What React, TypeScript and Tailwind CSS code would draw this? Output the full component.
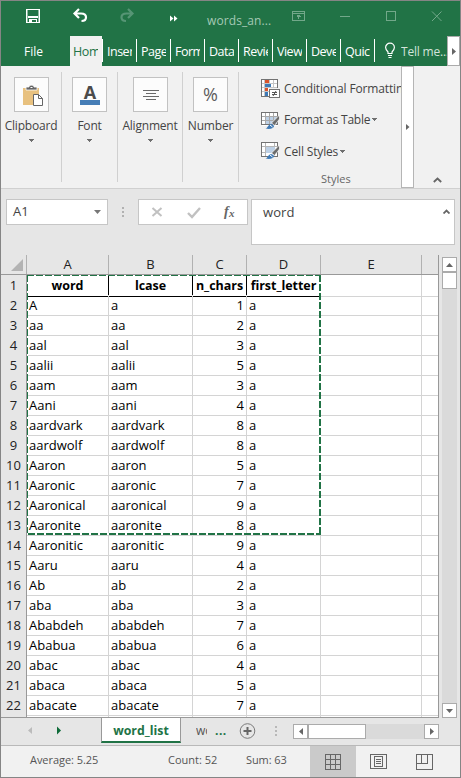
import React from "react";

const WORDS: [string, string, number][] = [
  ["A", "a", 1],
  ["aa", "aa", 2],
  ["aal", "aal", 3],
  ["aalii", "aalii", 5],
  ["aam", "aam", 3],
  ["Aani", "aani", 4],
  ["aardvark", "aardvark", 8],
  ["aardwolf", "aardwolf", 8],
  ["Aaron", "aaron", 5],
  ["Aaronic", "aaronic", 7],
  ["Aaronical", "aaronical", 9],
  ["Aaronite", "aaronite", 8],
  ["Aaronitic", "aaronitic", 9],
  ["Aaru", "aaru", 4],
  ["Ab", "ab", 2],
  ["aba", "aba", 3],
  ["Ababdeh", "ababdeh", 7],
  ["Ababua", "ababua", 6],
  ["abac", "abac", 4],
  ["abaca", "abaca", 5],
  ["abacate", "abacate", 7],
];

const TABS = ["Inser", "Page", "Form", "Data", "Revie", "View", "Deve", "Quic"];

function Caret({ className = "" }: { className?: string }) {
  return (
    <svg width="5" height="3" className={className} shapeRendering="crispEdges">
      <path d="M0 0h5v1h-1v1h-1v1h-1v-1h-1v-1h-1z" fill="#6f6f6f" />
    </svg>
  );
}

function TitleBar() {
  return (
    <div className="flex h-[35px]">
      <svg width="206" height="35" fill="none">
        <g shapeRendering="crispEdges">
          <path d="M25.500 8.500h13v13h-13z" stroke="#fff" />
          <path d="M26 15h12v2H26z" fill="#fff" />
          <path d="M26 9h1v12h-1zM37 9h1v12h-1z" fill="#90b9a3" />
          <path d="M28 18h8v3h-1v-2h-4v2h-3z" fill="#fff" />
        </g>
        <path d="M78 8l-4.500 4.500L78 17M74 12.500h6c3.500 0 5 1.500 5 3.700s-1.800 3.800-4.500 3.800" stroke="#fff" strokeWidth="2.200" />
        <path d="M127 8l4.500 4.500L127 17M131 12.500h-5.500c-3.500 0-5 1.500-5 3.700s1.800 3.800 4.500 3.800" stroke="#569575" strokeWidth="2.200" />
        <path d="M169 14.500l3.500 3-3.500 3zM173 14.500l3.500 3-3.500 3z" fill="#fff" />
      </svg>
      <div className="w-[78px] pt-[11px] text-[12px] leading-[18px] tracking-[0.1px] text-[#a5c9b5]">words_an...</div>
      <svg width="175" height="35" fill="none" stroke="#72a88a" shapeRendering="crispEdges">
        <path d="M7.500 10.500h12v9h-12zM8 12.500h11M13.500 18v-4M11.500 15.500h1v-1h2v1h1" />
        <path d="M55 15.500h10M101.500 10.500h9v9h-9z" />
        <path d="M147 10.500l9.500 9.500M156.500 10.500L147 20" shapeRendering="auto" />
      </svg>
    </div>
  );
}

function Tabs() {
  return (
    <div className="flex h-[30px] text-[12.5px] leading-[31px] text-white">
      <div className="w-[69px] pl-[23px] text-[12px]">File</div>
      <div className="w-[32px] bg-[#f1f1f1] pl-[3px] text-[#217346]">
        <div className="w-[25px] overflow-hidden tracking-[-0.4px]">Home</div>
      </div>
      {TABS.map((t) => (
        <div key={t} className="flex w-[34px] shrink-0">
          <div className="mt-[3px] h-[23px] w-px bg-white" />
          <div className="ml-[4px] w-[25px] overflow-hidden tracking-[-0.5px]">{t}</div>
        </div>
      ))}
      <div className="mt-[3px] h-[23px] w-px bg-white" />
      <svg width="12" height="17" className="mt-[6px] ml-[9px] shrink-0" fill="none" stroke="#fff" strokeWidth="1.200">
        <path d="M4 11.500V10C2.500 8.500 1.600 7.300 1.600 5.600a4.400 4.400 0 0 1 8.800 0c0 1.700-.9 2.900-2.400 4.400v1.500zM4 13.500h4M4.500 15.500h3" />
      </svg>
      <div className="ml-[5px] w-[46px] overflow-hidden text-[12px] tracking-[-0.2px] whitespace-nowrap text-[#d3e3da]">Tell me...</div>
      <div className="flex w-[13px] shrink-0 items-center justify-center border border-[#ababab] bg-white">
        <svg width="4" height="7"><path d="M0 0l4 3.500-4 3.500z" fill="#666" /></svg>
      </div>
    </div>
  );
}

function Group({ width, label, children }: { width: string; label: string; children: React.ReactNode }) {
  return (
    <div className={`flex h-[110px] shrink-0 flex-col items-center border-r border-[#d0d0d0] pt-[5px] ${width}`}>
      <div className="h-[35px] w-[35px] border border-[#c2c2c2] bg-[#fcfcfc]">{children}</div>
      <div className="mt-[5px] text-[12px] leading-[18px] tracking-[-0.2px] whitespace-nowrap">{label}</div>
      <Caret className="mt-[4px]" />
    </div>
  );
}

function TableIcon({ kind }: { kind: "conditional" | "table" | "cell" }) {
  return (
    <svg width="19" height="20" fill="none" className="shrink-0">
      <g shapeRendering="crispEdges">
        <path d="M.5.500h16v13h-16z" fill="#fff" />
        {kind === "conditional" && (
          <>
            <path d="M1 1h15v16H1z" fill="#fff" />
            <path d="M1 4.500h15M1 8.500h15M1 12.500h15M3.500 1v16M8.500 1v16M12.500 1v12" stroke="#c6c6c6" />
            <path d="M.5.500h16v17h-16z" stroke="#737373" />
            <path d="M4 1h4v3H4zM4 9h3v3H4z" fill="#d9532c" />
            <path d="M4 5h6v3H4zM4 13h3v4H4z" fill="#3f7ab6" />
            <path d="M8 9h11v11H8z" fill="#f1f1f1" />
            <path d="M8.500 10.500h10v8h-10z" fill="#fff" stroke="#737373" />
            <path d="M11 13.500h5M11 15.500h5" stroke="#555" />
          </>
        )}
        {kind === "table" && (
          <>
            <path d="M5 5h11v8H5z" fill="#bdd0e5" />
            <path d="M1 4.500h15M1 8.500h15M4.500 1v12M8.500 1v12M12.500 1v12" stroke="#a9a9a9" />
            <path d="M.5.500h16v12h-16z" stroke="#737373" />
          </>
        )}
        {kind === "cell" && (
          <>
            <path d="M1 4.500h15M1 10.500h15M4.500 1v13M13.500 1v13" stroke="#b5b5b5" />
            <path d="M5 5h9v6H5z" fill="#bdd0e5" />
            <path d="M.5.500h16v14h-16z" stroke="#737373" />
          </>
        )}
      </g>
      {kind === "conditional" ? (
        <path d="M15 12l-3 5" stroke="#555" />
      ) : (
        <>
          <path d="M18.500 3v4l-5 6.500-3-2.500z" fill="#6c6c6c" stroke="#fff" strokeWidth=".7" />
          <path d="M4.500 16.500c2.500-.5 2-3.500 5.500-4.500 2 .3 3 1.500 3 2.500-.7 2.100-4.500 3-8.500 2z" fill="#3f7ab6" />
          <path d="M9 13l2.500 2" stroke="#fff" />
        </>
      )}
    </svg>
  );
}

function Ribbon() {
  return (
    <div className="flex h-[123px] border-b border-[#d0d0d0] bg-[#f1f1f1] text-[#444]">
      <div className="flex pt-[6px]">
        <Group width="w-[61px]" label="Clipboard">
          <svg width="33" height="33" fill="none">
            <path d="M8 10h16v17H8z" fill="#e8c17f" />
            <path d="M11 12V9h3c0-2.500 5-2.500 5 0h3v3z" fill="#666" stroke="#fcfcfc" strokeWidth=".8" />
            <path d="M15.500 9.500h2" stroke="#fff" />
            <path d="M18.500 16.500h5l4 4v7h-9zM23.500 16.500v4h4" fill="#fff" stroke="#666" />
          </svg>
        </Group>
        <Group width="w-[56px]" label="Font">
          <svg width="33" height="33">
            <text x="17" y="21" textAnchor="middle" fontFamily="Open Sans" fontWeight="bold" fontSize="18" fill="#4b4b4b">A</text>
            <path d="M7 22h20v5H7z" fill="#467db6" />
          </svg>
        </Group>
        <Group width="w-[65px]" label="Alignment">
          <svg width="33" height="33" stroke="#6a6a6a" shapeRendering="crispEdges">
            <path d="M9 12.500h16M12 15.500h10M9 18.500h16M12 21.500h10" />
          </svg>
        </Group>
        <Group width="w-[56px]" label="Number">
          <div className="text-center text-[18px] leading-[33px] text-[#5d5d5d]">%</div>
        </Group>
      </div>
      <div className="flex w-[162px] flex-col overflow-hidden pt-[13px] pl-[22px] text-[12px] leading-[18px] tracking-[-0.15px] whitespace-nowrap">
        <div className="flex h-[34px] gap-[4px]"><TableIcon kind="conditional" /><span className="pt-px">Conditional Formatting</span></div>
        <div className="flex h-[30px] gap-[4px]"><TableIcon kind="table" /><span className="-mt-px tracking-[-0.2px]">Format as Table</span><Caret className="mt-[6px] -ml-[2px]" /></div>
        <div className="flex h-[28px] gap-[4px]"><TableIcon kind="cell" /><span className="pt-px">Cell Styles</span><Caret className="mt-[8px] -ml-[2px]" /></div>
        <div className="pt-px pl-[60px] text-[11px] tracking-normal text-[#666]">Styles</div>
      </div>
      <div className="flex w-[13px] shrink-0 items-center justify-center border border-[#b5b5b5] bg-white">
        <svg width="4" height="6"><path d="M0 0l3.500 3-3.500 3z" fill="#666" /></svg>
      </div>
      <div className="flex flex-1 items-end justify-center pb-[5px]">
        <svg width="9" height="6" fill="none"><path d="M.8 5L4.500 1.500 8.200 5" stroke="#666" strokeWidth="1.800" /></svg>
      </div>
    </div>
  );
}

function FormulaBar() {
  return (
    <div className="flex h-[66px] bg-[#e6e6e6] pt-[10px] pl-[5px] text-[13px] text-[#444]">
      <div className="flex h-[26px] w-[102px] items-center justify-between border border-[#c6c6c6] bg-white pr-[6px] pl-[6px]">
        <span>A1</span>
        <svg width="7" height="4"><path d="M0 0h7L3.500 4z" fill="#777" /></svg>
      </div>
      <svg width="30" height="26" shapeRendering="crispEdges"><path d="M14 8h2v2h-2zM14 12h2v2h-2zM14 16h2v2h-2z" fill="#b1b1b1" /></svg>
      <div className="h-[26px] w-[110px] border border-[#c6c6c6] bg-white">
        <svg width="108" height="24" fill="none">
          <path d="M13.500 8l9 8M22.500 8l-9 8" stroke="#c1c1c1" strokeWidth="2" />
          <path d="M49 13l4 4 8-9" stroke="#c1c1c1" strokeWidth="2.400" />
          <text x="85" y="16" fontFamily="Liberation Serif" fontStyle="italic" fontWeight="bold" fontSize="14" fill="#666">f</text>
          <text x="90" y="17" fontFamily="Liberation Serif" fontStyle="italic" fontWeight="bold" fontSize="11" fill="#666">x</text>
        </svg>
      </div>
      <div className="ml-[3px] flex h-[46px] w-[204px] justify-between border border-[#c6c6c6] bg-white pt-[3px] pr-[4px] pl-[11px]">
        <span className="tracking-[0.1px]">word</span>
        <svg width="7" height="5" fill="none" className="mt-[6px]"><path d="M.5 4.500l3-3 3 3" stroke="#666" strokeWidth="1.800" /></svg>
      </div>
    </div>
  );
}

function Sheet() {
  const headLine = "border-r border-[#b1b1b1]";
  return (
    <div className="relative flex h-[463px] bg-[#e6e6e6]">
      <div className="w-[438px] overflow-hidden border-r border-b border-[#999]">
        <div className="grid h-[20px] grid-cols-[26px_82px_84px_54px_74px_101px_16px] border-b border-[#999] text-center text-[13px] leading-[19px] text-[#222]">
          <div className="flex items-end justify-end border-r border-[#b1b1b1] pr-[3px] pb-[3px]">
            <svg width="12" height="12"><path d="M12 0v12H0z" fill="#b3b3b3" /></svg>
          </div>
          {["A", "B", "C", "D", "E"].map((c) => <div key={c} className={headLine}>{c}</div>)}
        </div>
        <div className="grid h-[20px] grid-cols-[26px_82px_84px_54px_74px_101px_16px] bg-white text-[13px] leading-[20px] text-black">
          <div className="border-r border-b border-[#b1b1b1] border-r-[#999] bg-[#e6e6e6] text-center text-[#222]">1</div>
          {["word", "lcase", "n_chars", "first_letter"].map((c) => (
            <div key={c} className="border-r border-b border-black text-center text-[12.5px] leading-[21px] font-bold whitespace-nowrap">
              <span className="-mx-2 tracking-[-0.05px]">{c}</span>
            </div>
          ))}
          <div className="border-r border-b border-[#d4d4d4]" />
          <div className="border-b border-[#d4d4d4]" />
        </div>
        {[...WORDS, null].map((w, i) => (
          <div key={i} className="grid h-[20px] grid-cols-[26px_82px_84px_54px_74px_101px_16px] bg-white text-[13px] leading-[20px] text-black">
            <div className="border-r border-b border-[#b1b1b1] border-r-[#999] bg-[#e6e6e6] text-center text-[#222]">{w ? i + 2 : ""}</div>
            <div className="border-r border-b border-[#d4d4d4] pl-[2px]">{w?.[0]}</div>
            <div className="border-r border-b border-[#d4d4d4] pl-[2px]">{w?.[1]}</div>
            <div className="border-r border-b border-[#d4d4d4] pr-[2px] text-right">{w?.[2]}</div>
            <div className="border-r border-b border-[#d4d4d4] pl-[2px]">{w && "a"}</div>
            <div className="border-r border-b border-[#d4d4d4]" />
            <div className="border-b border-[#d4d4d4]" />
          </div>
        ))}
      </div>
      {/* Marching-ants outline around the copied range */}
      <svg width="296" height="262" className="absolute top-[19px] left-[25px]" fill="none" shapeRendering="crispEdges">
        <path d="M1 1.500h294M1.500 1v259" stroke="#fff" />
        <path d="M1 1.500h294M1.500 1v259" stroke="#217346" strokeDasharray="7 2" />
        <path d="M294 1v259M1 260h294" stroke="#fff" strokeWidth="2" />
        <path d="M294 1v260M2 260h293" stroke="#217346" strokeWidth="2" strokeDasharray="7 2" />
      </svg>
      <div className="mt-[2px] ml-[3px] flex h-[461px] w-[15px] flex-col bg-[#dadada]">
        <div className="flex h-[15px] items-center justify-center border border-[#ababab] bg-white">
          <svg width="7" height="4"><path d="M3.500 0L7 4H0z" fill="#666" /></svg>
        </div>
        <div className="h-[17px] border border-[#ababab] bg-white" />
        <div className="flex-1" />
        <div className="flex h-[15px] items-center justify-center border border-[#ababab] bg-white">
          <svg width="7" height="4"><path d="M0 0h7L3.500 4z" fill="#666" /></svg>
        </div>
      </div>
    </div>
  );
}

function SheetTabs() {
  return (
    <div className="flex h-[28px] border-b border-[#b9b9b9] bg-[#e6e6e6] text-[12px] leading-[25px]">
      <svg width="100" height="27">
        <path d="M31 9v7l-4-3.500z" fill="#bbb" />
        <path d="M56 8.500v8l4-4z" fill="#0e6b39" />
      </svg>
      <div className="h-[25px] w-[80px] border-x border-b-2 border-x-[#999] border-b-[#217346] bg-white text-center text-[12.3px] font-bold text-[#217346]">word_list</div>
      <div className="ml-[15px] w-[11px] overflow-hidden text-[#555]">wo</div>
      <div className="ml-[8px] w-[24px] font-bold tracking-[0.5px] text-[#217346]">...</div>
      <svg width="17" height="27" fill="none">
        <circle cx="8.500" cy="13" r="7.300" stroke="#7a7a7a" />
        <path d="M4.500 13h8M8.500 9v8" stroke="#666" strokeWidth="2" />
      </svg>
      <svg width="37" height="27" shapeRendering="crispEdges"><path d="M19 8h2v2h-2zM19 12h2v2h-2zM19 16h2v2h-2z" fill="#b8b8b8" /></svg>
      <div className="mt-[6px] flex h-[15px] w-[146px] bg-[#dadada]">
        <div className="flex w-[15px] items-center justify-center border border-[#ababab] bg-white">
          <svg width="4" height="7"><path d="M4 0v7L0 3.500z" fill="#666" /></svg>
        </div>
        <div className="w-[58px] border border-[#ababab] bg-white" />
        <div className="flex-1" />
        <div className="flex w-[15px] items-center justify-center border border-[#ababab] bg-white">
          <svg width="4" height="7"><path d="M0 0v7l4-3.500z" fill="#666" /></svg>
        </div>
      </div>
    </div>
  );
}

function StatusBar() {
  return (
    <div className="flex h-[31px] bg-[#f1f1f1] text-[11px] leading-[28px] whitespace-nowrap text-[#555]">
      <div className="w-[138px] pl-[29px] tracking-[-0.05px]">Average: 5.25</div>
      <div className="w-[78px] pl-[29px]">Count: 52</div>
      <div className="w-[93px] pl-[29px] tracking-[-0.1px]">Sum: 63</div>
      <div className="w-[46px] bg-[#cacaca]">
        <svg width="46" height="31" fill="none" stroke="#666" shapeRendering="crispEdges">
          <path d="M15.500 8.500h15v15h-15zM16 13.500h15M16 18.500h15M20.500 9v15M25.500 9v15" />
        </svg>
      </div>
      <svg width="90" height="31" fill="none" stroke="#666" shapeRendering="crispEdges">
        <path d="M14.500 8.500h16v14h-16zM18.500 10.500h8v10h-8zM20 13.500h5M20 15.500h5M20 17.500h5" />
        <path d="M60.500 8.500h16v15h-16zM61 17.500h10.500V9M65.500 9v8" />
      </svg>
    </div>
  );
}

export default function App() {
  return (
    <div className="flex h-[778px] w-[461px] flex-col overflow-hidden border border-[#858585] bg-[#217346] font-['Open_Sans','Noto_Sans',sans-serif]">
      <TitleBar />
      <Tabs />
      <Ribbon />
      <FormulaBar />
      <Sheet />
      <SheetTabs />
      <StatusBar />
    </div>
  );
}
